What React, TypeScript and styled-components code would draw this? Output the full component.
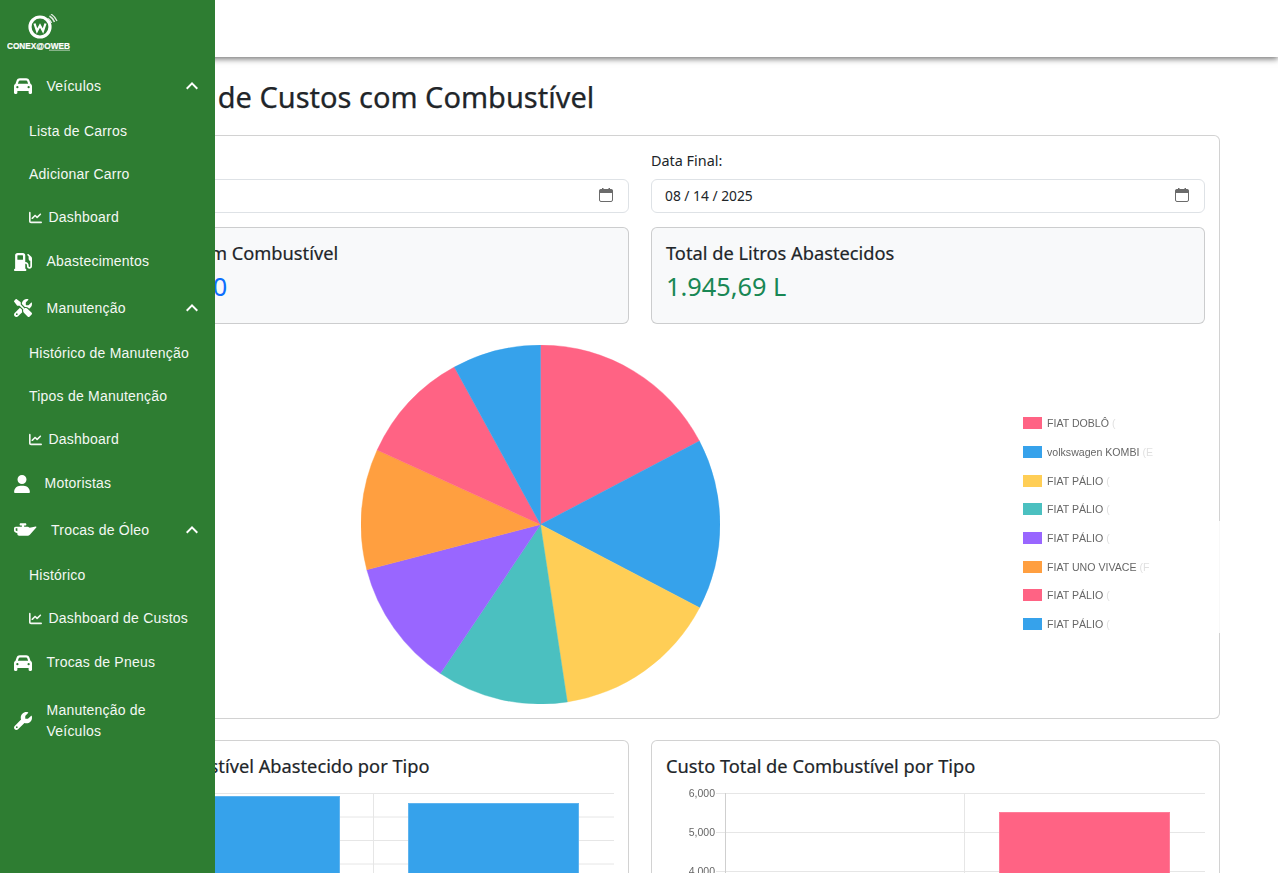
import React from 'react';
import styled, {createGlobalStyle} from 'styled-components';
import {FaCar, FaChartLine, FaGasPump, FaOilCan, FaScrewdriverWrench, FaUser, FaWrench} from 'react-icons/fa6';

const GlobalStyle = createGlobalStyle`
  * { box-sizing: border-box; }
  html, body { margin: 0; padding: 0; background: #fff; }
  body { font-family: "Noto Sans", sans-serif; color: #212529; }
`

type SubItem = {label: string; chart?: boolean}
type NavEntry = {label: string; icon: React.ReactNode; iconWidth?: number; open?: boolean; subs?: SubItem[]}

const nav: NavEntry[] = [
    {label: 'Veículos', icon: <FaCar/>, open: true, subs: [
        {label: 'Lista de Carros'}, {label: 'Adicionar Carro'}, {label: 'Dashboard', chart: true},
    ]},
    {label: 'Abastecimentos', icon: <FaGasPump/>},
    {label: 'Manutenção', icon: <FaScrewdriverWrench/>, open: true, subs: [
        {label: 'Histórico de Manutenção'}, {label: 'Tipos de Manutenção'}, {label: 'Dashboard', chart: true},
    ]},
    {label: 'Motoristas', icon: <FaUser/>, iconWidth: 16},
    {label: 'Trocas de Óleo', icon: <FaOilCan/>, iconWidth: 22.5, open: true, subs: [
        {label: 'Histórico'}, {label: 'Dashboard de Custos', chart: true},
    ]},
    {label: 'Trocas de Pneus', icon: <FaCar/>},
    {label: 'Manutenção de Veículos', icon: <FaWrench/>},
]

const slices = [
    {from: 0, to: 62.3, color: '#FF6384'},
    {from: 62.3, to: 117.6, color: '#36A2EB'},
    {from: 117.6, to: 171.4, color: '#FFCE56'},
    {from: 171.4, to: 213.9, color: '#4BC0C0'},
    {from: 213.9, to: 255.4, color: '#9966FF'},
    {from: 255.4, to: 294.5, color: '#FF9F40'},
    {from: 294.5, to: 331.3, color: '#FF6384'},
    {from: 331.3, to: 360, color: '#36A2EB'},
]

const legend = [
    {name: 'FIAT DOBLÔ', tail: '(', color: '#FF6384'},
    {name: 'volkswagen KOMBI', tail: '(E', color: '#36A2EB'},
    {name: 'FIAT PÁLIO', tail: '(', color: '#FFCE56'},
    {name: 'FIAT PÁLIO', tail: '(', color: '#4BC0C0'},
    {name: 'FIAT PÁLIO', tail: '(', color: '#9966FF'},
    {name: 'FIAT UNO VIVACE', tail: '(F', color: '#FF9F40'},
    {name: 'FIAT PÁLIO', tail: '(', color: '#FF6384'},
    {name: 'FIAT PÁLIO', tail: '(', color: '#36A2EB'},
]

const slicePath = (from: number, to: number) => {
    const r = 179.5
    const point = (deg: number) => {
        const a = (deg * Math.PI) / 180
        return `${(r + r * Math.sin(a)).toFixed(2)} ${(r - r * Math.cos(a)).toFixed(2)}`
    }
    return `M${r} ${r} L${point(from)} A${r} ${r} 0 ${to - from > 180 ? 1 : 0} 1 ${point(to)} Z`
}

type BarChartProps = {
    step: number
    ticks: string[]
    color: string
    edge: string
    bars: {x: number; width: number; top: number}[]
}

// same drawing for both small charts: y = 8 is the top grid line inside the svg
const BarChart = ({step, ticks, color, edge, bars}: BarChartProps) => {
    const axisX = 59
    const bottom = 8 + step * (ticks.length - 1)
    return (
        <ChartSvg width={539} height={bottom + 24} viewBox={`0 0 539 ${bottom + 24}`}>
            {ticks.map((tick, i) => (
                <g key={i}>
                    <line x1={axisX - 9} x2={539} y1={8.5 + step * i} y2={8.5 + step * i} stroke="#e6e6e6"/>
                    <AxisLabel x={axisX - 10} y={12 + step * i} textAnchor="end">{tick}</AxisLabel>
                </g>
            ))}
            <line x1={axisX + 0.5} x2={axisX + 0.5} y1={8} y2={bottom} stroke="#cfcfcf"/>
            <line x1={298.5} x2={298.5} y1={8} y2={bottom} stroke="#e6e6e6"/>
            {bars.map(bar => (
                <rect key={bar.x} x={bar.x} y={bar.top} width={bar.width} height={bottom - bar.top}
                      fill={color} stroke={edge} strokeWidth={1}/>
            ))}
        </ChartSvg>
    )
}

const CalendarIcon = () => (
    <svg width="16" height="16" viewBox="0 0 16 16">
        <path d="M4 1h1.5v2H4zM10.5 1H12v2h-1.5z" fill="#6b6b6b"/>
        <rect x="1.5" y="2.5" width="13" height="12" rx="1.5" fill="none" stroke="#6b6b6b"/>
        <rect x="1.5" y="2.5" width="13" height="3.5" fill="#6b6b6b"/>
    </svg>
)

export default function App() {
    return (
        <Viewport>
            <GlobalStyle/>
            <Sidebar>
                <LogoWrap>
                    <svg width="66" height="40" viewBox="0 0 66 40">
                        <circle cx="33" cy="13" r="10" fill="none" stroke="#fff" strokeWidth="3.2"/>
                        <path d="M27.5 9.5 L30 17 L33 11.5 L36 17 L38.5 9.5" fill="none" stroke="#fff" strokeWidth="2.2"/>
                        <path d="M41 4.5 A9 9 0 0 1 44.5 9" fill="none" stroke="#dfe9df" strokeWidth="1.5"/>
                        <path d="M42.5 2 A12 12 0 0 1 47.5 8" fill="none" stroke="#dfe9df" strokeWidth="1.5"/>
                        <path d="M44 0 A15 15 0 0 1 50 7" fill="none" stroke="#dfe9df" strokeWidth="1.2"/>
                        <LogoText x="0" y="34.5" textLength="63" lengthAdjust="spacingAndGlyphs">CONEX@OWEB</LogoText>
                        <rect x="42" y="35.5" width="21" height="1.5" fill="#cfe0cf" opacity="0.55"/>
                    </svg>
                </LogoWrap>
                <NavList>
                    {nav.map(entry => (
                        <NavGroup key={entry.label}>
                            <NavRow>
                                <NavIcon $width={entry.iconWidth ?? 18}>{entry.icon}</NavIcon>
                                <NavLabel>{entry.label}</NavLabel>
                                {entry.open && (
                                    <Chevron viewBox="0 0 24 24">
                                        <path d="M12 8l-6 6 1.41 1.41L12 10.83l4.59 4.58L18 14z"/>
                                    </Chevron>
                                )}
                            </NavRow>
                            {entry.subs?.map(sub => (
                                <SubRow key={sub.label}>
                                    {sub.chart && <SubIcon><FaChartLine/></SubIcon>}
                                    {sub.label}
                                </SubRow>
                            ))}
                        </NavGroup>
                    ))}
                </NavList>
            </Sidebar>

            <TopBar/>
            <Main>
                <PageTitle>Dashboard de Custos com Combustível</PageTitle>
                <Card>
                    <TwoColumns>
                        <Field>
                            <FieldLabel>Data Inicial:</FieldLabel>
                            <DateBox>01 / 01 / 2025<CalendarIcon/></DateBox>
                        </Field>
                        <Field>
                            <FieldLabel>Data Final:</FieldLabel>
                            <DateBox>08 / 14 / 2025<CalendarIcon/></DateBox>
                        </Field>
                    </TwoColumns>
                    <TwoColumns>
                        <StatCard>
                            <StatTitle>Custo Total com Combustível</StatTitle>
                            <StatValue $color="#0d6efd">R$ 9.250,00</StatValue>
                        </StatCard>
                        <StatCard>
                            <StatTitle>Total de Litros Abastecidos</StatTitle>
                            <StatValue $color="#198754">1.945,69 L</StatValue>
                        </StatCard>
                    </TwoColumns>
                    <PieRow>
                        <svg width="359" height="359" viewBox="0 0 359 359">
                            {slices.map(s => (
                                <path key={s.from} d={slicePath(s.from, s.to)} fill={s.color} stroke={s.color} strokeWidth={0.4}/>
                            ))}
                        </svg>
                        <Legend>
                            {legend.map((item, i) => (
                                <LegendItem key={i}>
                                    <Swatch $color={item.color}/>
                                    <LegendName>{item.name}</LegendName>
                                    <LegendTail>{item.tail}</LegendTail>
                                </LegendItem>
                            ))}
                        </Legend>
                    </PieRow>
                    <BorderFade/>
                </Card>
                <ChartColumns>
                    <ChartCard>
                        <ChartTitle>Total de Combustível Abastecido por Tipo</ChartTitle>
                        <BarChart step={23.5} ticks={['1,000', '950', '900', '850', '800', '750', '700', '650', '600']}
                                  color="#36A2EB" edge="#5fb4ef"
                                  bars={[{x: 93.5, width: 171, top: 11.5}, {x: 333.5, width: 170, top: 18.5}]}/>
                    </ChartCard>
                    <ChartCard>
                        <ChartTitle>Custo Total de Combustível por Tipo</ChartTitle>
                        <BarChart step={39} ticks={['6,000', '5,000', '4,000', '3,000', '2,000', '1,000', '0']}
                                  color="#FF6384" edge="#ff7d99"
                                  bars={[{x: 333.5, width: 170, top: 27.5}]}/>
                    </ChartCard>
                </ChartColumns>
            </Main>
        </Viewport>
    );
}

const Viewport = styled.div`
  position: relative;
  height: 873px;
  overflow: hidden;
`
const Sidebar = styled.aside`
  position: absolute;
  left: 0;
  top: 0;
  bottom: 0;
  width: 215px;
  background: #2e7d32;
  color: #f4f8f4;
  z-index: 5;
  font-family: "Liberation Sans", sans-serif;
`
const LogoWrap = styled.div`
  height: 63px;
  padding: 14px 0 0 7px;

  svg {
    display: block;
  }
`
const LogoText = styled.text`
  font-family: "Liberation Sans", sans-serif;
  font-weight: 700;
  font-size: 8.8px;
  fill: #fff;
  stroke: #fff;
  stroke-width: 0.2px;
`
const NavList = styled.ul`
  list-style: none;
  margin: 0;
  padding: 0;
`
const NavGroup = styled.li`
  &:last-child {
    padding-top: 1px;
  }
`
const NavRow = styled.div`
  display: flex;
  align-items: center;
  padding: 12.75px 11px 12.75px 14px;
  font-size: 14px;
  line-height: 21px;
  letter-spacing: 0.22px;
`
const NavIcon = styled.span<{$width: number}>`
  display: flex;
  flex-shrink: 0;
  margin-right: 14.5px;
  color: #fff;

  svg {
    width: ${p => p.$width}px;
    height: 18px;
  }
`
const NavLabel = styled.span`
  flex: 1;
  max-width: 130px;
`
const Chevron = styled.svg`
  width: 24px;
  height: 24px;
  margin: -2px 0 -2px auto;
  fill: #fff;
  flex-shrink: 0;
`
const SubRow = styled.div`
  display: flex;
  align-items: center;
  height: 43px;
  padding-left: 29px;
  font-size: 14px;
  letter-spacing: 0.22px;
`
const SubIcon = styled.span`
  display: flex;
  margin-right: 6.5px;
  font-size: 13px;
`
const TopBar = styled.header`
  height: 57px;
  background: #fff;
  box-shadow: 0 2px 6px rgba(0, 0, 0, 0.55);
`
const Main = styled.main`
  padding: 0 58px 0 60px;
`
const PageTitle = styled.h2`
  margin: 19px 0 17px;
  font-size: 29px;
  font-weight: 400;
  -webkit-text-stroke: 0.25px #212529;
  line-height: 42px;
  white-space: nowrap;
`
const Card = styled.section`
  position: relative;
  border: 1px solid rgba(0, 0, 0, 0.175);
  border-radius: 6px;
  padding: 14px 14px 14px;
  background: #fff;
`
const BorderFade = styled.span`
  position: absolute;
  right: -1px;
  top: 385px;
  width: 1px;
  height: 112px;
  background: rgba(255, 255, 255, 0.85);
`
const TwoColumns = styled.div`
  display: grid;
  grid-template-columns: 1fr 1fr;
  gap: 22px;
  margin-bottom: 14px;
`
const Field = styled.div`
  display: flex;
  flex-direction: column;
`
const FieldLabel = styled.label`
  font-size: 14.4px;
  line-height: 21px;
  margin-bottom: 8px;
`
const DateBox = styled.div`
  display: flex;
  align-items: center;
  justify-content: space-between;
  height: 34px;
  padding: 0 14px 2px 13px;
  border: 1px solid #dee2e6;
  border-radius: 6px;
  background: #fff;
  color: #212529;
  font-size: 13.8px;
  white-space: nowrap;
`
const StatCard = styled.div`
  height: 97px;
  padding: 13px 14px;
  background: #f8f9fa;
  border: 1px solid rgba(0, 0, 0, 0.175);
  border-radius: 6px;
`
const StatTitle = styled.h5`
  margin: 0 0 5px;
  font-size: 18.25px;
  font-weight: 400;
  -webkit-text-stroke: 0.2px #212529;
  line-height: 24px;
`
const StatValue = styled.div<{$color: string}>`
  color: ${p => p.$color};
  font-size: 25.3px;
  line-height: 33px;
`
const PieRow = styled.div`
  display: flex;
  padding: 7px 0 0 286px;
`
const Legend = styled.ul`
  list-style: none;
  margin: 71px 0 0 303px;
  padding: 0;
  display: flex;
  flex-direction: column;
  gap: 14px;
`
const LegendItem = styled.li`
  display: flex;
  align-items: center;
  height: 14.7px;
  font-family: "Liberation Sans", sans-serif;
  font-size: 10.6px;
  color: #666;
  white-space: nowrap;
  filter: blur(0.4px);
`
const Swatch = styled.span<{$color: string}>`
  width: 19px;
  height: 12px;
  margin-right: 5px;
  background: ${p => p.$color};
`
const LegendName = styled.span``
const LegendTail = styled.span`
  margin-left: 3px;
  opacity: 0.2;
`
const ChartColumns = styled.div`
  display: grid;
  grid-template-columns: 1fr 1fr;
  gap: 22px;
  margin-top: 21px;
`
const ChartCard = styled.section`
  height: 340px;
  padding: 13px 14px 0;
  border: 1px solid rgba(0, 0, 0, 0.175);
  border-radius: 6px;
  background: #fff;
`
const ChartTitle = styled.h5`
  margin: 0 0 7px;
  font-size: 18.25px;
  font-weight: 400;
  -webkit-text-stroke: 0.2px #212529;
  line-height: 24px;
  white-space: nowrap;
`
const ChartSvg = styled.svg`
  display: block;
`
const AxisLabel = styled.text`
  font-family: "Liberation Sans", sans-serif;
  font-size: 10.5px;
  fill: #666;
  filter: blur(0.25px);
`
